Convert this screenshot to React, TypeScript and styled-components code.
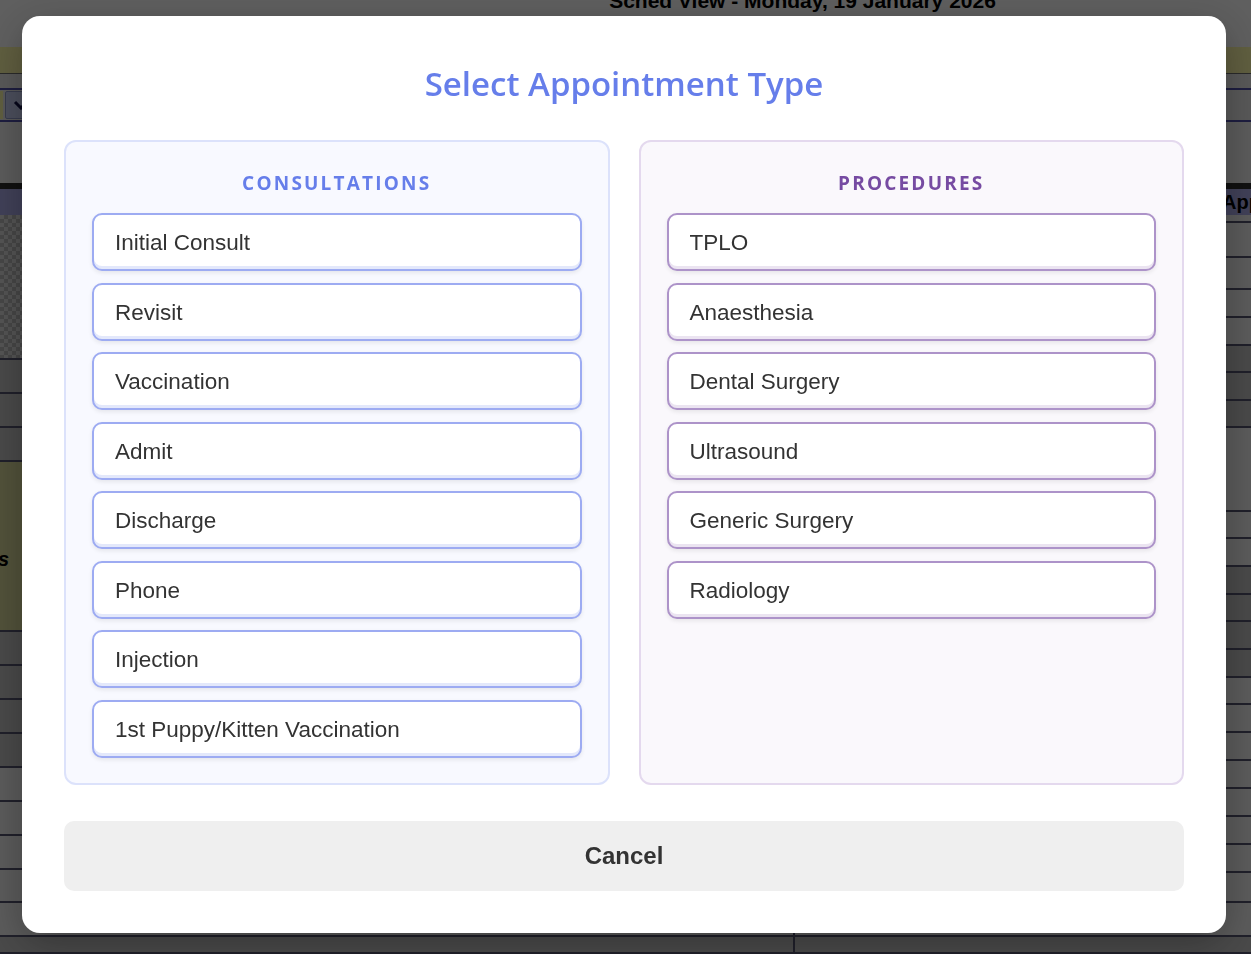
import React from 'react'
import styled, { createGlobalStyle } from 'styled-components'

type Tone = 'consult' | 'procedure'

const tones = {
  consult: {
    heading: '#667eea',
    panelBg: '#f8f9ff',
    panelBorder: '#dce2fb',
    buttonBorder: '#9dabf2',
    inset: 'rgba(102, 126, 234, 0.18)',
  },
  procedure: {
    heading: '#764ba2',
    panelBg: '#faf8fc',
    panelBorder: '#e4d9ee',
    buttonBorder: '#ad93c9',
    inset: 'rgba(118, 75, 162, 0.15)',
  },
}

const consultations = [
  'Initial Consult',
  'Revisit',
  'Vaccination',
  'Admit',
  'Discharge',
  'Phone',
  'Injection',
  '1st Puppy/Kitten Vaccination',
]

const procedures = [
  'TPLO',
  'Anaesthesia',
  'Dental Surgery',
  'Ultrasound',
  'Generic Surgery',
  'Radiology',
]

// schedule rows behind the dialog (height, shade)
type Shade = 'light' | 'dark' | 'olive' | 'checker'
const leftRows: [number, Shade][] = [
  [145, 'checker'],
  [34, 'dark'],
  [34, 'dark'],
  [34, 'dark'],
  [170, 'olive'],
  [34, 'dark'],
  [34, 'dark'],
  [34, 'dark'],
  [34, 'dark'],
  [34, 'light'],
  [34, 'light'],
  [34, 'light'],
  [33, 'light'],
  [34, 'light'],
  [17, 'dark'],
]
const rightRows: [number, Shade][] = [
  [8, 'light'],
  [35, 'light'],
  [32, 'light'],
  [28, 'light'],
  [28, 'light'],
  [27, 'dark'],
  [28, 'dark'],
  [27, 'dark'],
  [84, 'light'],
  [27, 'light'],
  [28, 'light'],
  [28, 'dark'],
  [27, 'dark'],
  [28, 'dark'],
  [28, 'dark'],
  [27, 'light'],
  [28, 'light'],
  [28, 'light'],
  [28, 'light'],
  [28, 'light'],
  [28, 'light'],
  [28, 'light'],
  [30, 'light'],
  [34, 'light'],
  [17, 'dark'],
]

const GlobalStyle = createGlobalStyle`
  html, body {
    margin: 0;
    padding: 0;
    height: 100%;
    overflow: hidden;
  }
  body {
    font-family: "Liberation Sans", Arial, sans-serif;
    background: #e2e2e2;
  }
`

/* ---------- schedule page (behind the dialog) ---------- */

const Page = styled.div`
  width: 1251px;
  height: 954px;
  display: flex;
  flex-direction: column;
  background: #e2e2e2;
  overflow: hidden;
`

const TopBar = styled.header`
  height: 47px;
  flex-shrink: 0;
  background: #eeeeee;
  display: flex;
  justify-content: center;
  padding-left: 354px;
  box-sizing: border-box;
  overflow: hidden;
`

const PageTitle = styled.h1`
  margin: -11px 0 0;
  font: bold 21px/24px "Liberation Sans", Arial, sans-serif;
  color: #000;
  white-space: nowrap;
`

const Band = styled.div`
  height: 26px;
  flex-shrink: 0;
  background: #f0eca0;
  border-bottom: 1px solid #6a6a6a;
`

const Controls = styled.div`
  height: 48px;
  flex-shrink: 0;
  background: #dedede;
  padding-top: 14px;
  box-sizing: border-box;
`

const SelectRow = styled.div`
  height: 34px;
  box-sizing: border-box;
  border-top: 2px solid #4a4aa0;
  border-bottom: 2px solid #4a4aa0;
  display: flex;
  align-items: stretch;
  gap: 2px;
  padding: 1px 0;
`

const SelectEdge = styled.div`
  width: 3px;
  background: #f0eca0;
`

const SelectArrow = styled.div`
  width: 30px;
  background: #bcc4e6;
  border: 1px solid #8a93c0;
  border-radius: 2px;
  display: flex;
  align-items: center;
  justify-content: center;
  color: #101040;
`

const Filler = styled.div`
  height: 61px;
  flex-shrink: 0;
  background: #e4e4e4;
`

const BlackBar = styled.div`
  height: 6px;
  flex-shrink: 0;
  background: #2a2a2a;
`

const HeadRow = styled.div`
  height: 26px;
  flex-shrink: 0;
  background: #a2a2dc;
  display: flex;
  align-items: center;
  padding-left: 1222px;
  font: bold 20px "Liberation Sans", Arial, sans-serif;
  color: #000;
  white-space: nowrap;
`

const Body = styled.div`
  flex: 1;
  display: flex;
  overflow: hidden;
`

const Column = styled.div<{ $width?: number }>`
  width: ${p => (p.$width ? `${p.$width}px` : 'auto')};
  flex: ${p => (p.$width ? '0 0 auto' : '1')};
  display: flex;
  flex-direction: column;
  border-left: ${p => (p.$width ? 'none' : '2px solid #50506a')};
`

const shadeBg: Record<Shade, string> = {
  light: '#e4e4e4',
  dark: '#b8b8b8',
  olive: '#cdcd92',
  checker:
    'repeating-conic-gradient(#b0b0b0 0% 25%, #d2d2d2 0% 50%) 0 0 / 8px 8px',
}

const Slot = styled.div<{ $shade: Shade }>`
  flex-shrink: 0;
  box-sizing: border-box;
  background: ${p => shadeBg[p.$shade]};
  border-bottom: 2px solid #50506a;
  display: flex;
  align-items: center;
`

const SlotLabel = styled.div`
  width: 9px;
  margin-top: 26px;
  display: flex;
  justify-content: flex-end;
  white-space: nowrap;
  font: italic bold 20px "Liberation Sans", Arial, sans-serif;
  color: #000;
`

/* ---------- dialog ---------- */

const Overlay = styled.div`
  position: fixed;
  inset: 0;
  background: rgba(0, 0, 0, 0.6);
  padding: 16px 0 0 22px;
  box-sizing: border-box;
`

const Dialog = styled.div`
  width: 1204px;
  box-sizing: border-box;
  background: #ffffff;
  border-radius: 18px;
  padding: 42px;
  box-shadow: 0 10px 40px rgba(0, 0, 0, 0.3);
`

const Title = styled.h2`
  margin: 4px 0 34px;
  text-align: center;
  font: 600 33px/44px "Open Sans", "Noto Sans", sans-serif;
  color: #667eea;
`

const Columns = styled.div`
  display: grid;
  grid-template-columns: 1fr 1fr;
  gap: 29px;
`

const Panel = styled.section<{ $tone: Tone }>`
  background: ${p => tones[p.$tone].panelBg};
  border: 2px solid ${p => tones[p.$tone].panelBorder};
  border-radius: 12px;
  padding: 26px 26px 25.5px;
  display: flex;
  flex-direction: column;
  gap: 11.5px;
`

const PanelHeading = styled.h3<{ $tone: Tone }>`
  margin: 0 0 3.5px;
  height: 30px;
  text-align: center;
  font: 700 19px/30px "Open Sans", "Noto Sans", sans-serif;
  letter-spacing: 2.2px;
  text-transform: uppercase;
  color: ${p => tones[p.$tone].heading};
`

const TypeButton = styled.button<{ $tone: Tone }>`
  height: 58px;
  flex-shrink: 0;
  box-sizing: border-box;
  background: #ffffff;
  border: 2px solid ${p => tones[p.$tone].buttonBorder};
  border-radius: 10px;
  padding: 2px 21px 0;
  text-align: left;
  font: 22.5px "Liberation Sans", Arial, sans-serif;
  color: #333333;
  box-shadow: inset 0 -3px 0 ${p => tones[p.$tone].inset},
    0 2px 4px rgba(0, 0, 0, 0.08);
  cursor: pointer;
`

const CancelButton = styled.button`
  display: block;
  width: 100%;
  height: 70px;
  margin-top: 36px;
  border: none;
  border-radius: 10px;
  background: #efefef;
  font: bold 24px "Liberation Sans", Arial, sans-serif;
  color: #333333;
  cursor: pointer;
`

const TypeColumn: React.FC<{ tone: Tone; title: string; items: string[] }> = ({
  tone,
  title,
  items,
}) => (
  <Panel $tone={tone}>
    <PanelHeading $tone={tone}>{title}</PanelHeading>
    {items.map(item => (
      <TypeButton key={item} $tone={tone}>
        {item}
      </TypeButton>
    ))}
  </Panel>
)

export default function App() {
  return (
    <>
      <GlobalStyle />
      <Page>
        <TopBar>
          <PageTitle>Sched View - Monday, 19 January 2026</PageTitle>
        </TopBar>
        <Band />
        <Controls>
          <SelectRow>
            <SelectEdge />
            <SelectArrow>
              <svg width="16" height="10" viewBox="0 0 16 10">
                <path d="M2 2 L8 8 L14 2" fill="none" stroke="currentColor" strokeWidth="3" />
              </svg>
            </SelectArrow>
          </SelectRow>
        </Controls>
        <Filler />
        <BlackBar />
        <HeadRow>Appointments</HeadRow>
        <Body>
          <Column $width={793}>
            {leftRows.map(([h, shade], i) => (
              <Slot key={i} $shade={shade} style={{ height: h }}>
                {shade === 'olive' && <SlotLabel>Surgeries</SlotLabel>}
              </Slot>
            ))}
          </Column>
          <Column>
            {rightRows.map(([h, shade], i) => (
              <Slot key={i} $shade={shade} style={{ height: h }} />
            ))}
          </Column>
        </Body>
      </Page>

      <Overlay>
        <Dialog>
          <Title>Select Appointment Type</Title>
          <Columns>
            <TypeColumn tone="consult" title="Consultations" items={consultations} />
            <TypeColumn tone="procedure" title="Procedures" items={procedures} />
          </Columns>
          <CancelButton>Cancel</CancelButton>
        </Dialog>
      </Overlay>
    </>
  )
}
